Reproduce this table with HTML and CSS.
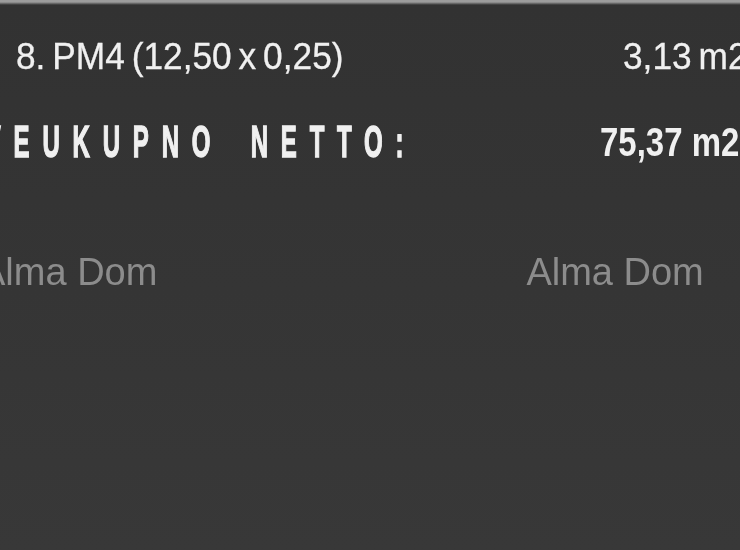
FILE: index.html
```html
<!DOCTYPE html>
<html lang="hr">
<head>
  <meta charset="UTF-8" />
  <meta name="viewport" content="width=device-width, initial-scale=1.0"/>
  <title>Tlocrt - površine</title>
  <link rel="stylesheet" href="styles.css">
</head>
<body>
  <div class="sheet">
    <div class="areas">
      <div class="row">
        <span class="label">8. PM4 (12,50 x 0,25)</span>
        <span class="value">3,13 m2</span>
      </div>
      <div class="row total">
        <span class="label">SVEUKUPNO NETTO:</span>
        <span class="value">75,37 m2</span>
      </div>
    </div>
    <div class="marks">
      <span class="mark">Alma Dom</span>
      <span class="mark">Alma Dom</span>
    </div>
  </div>
</body>
</html>
```

FILE: styles.css
```css
html, body {
  margin: 0;
  height: 100%;
  overflow: hidden;
  background: #363636;
  color: #f0f0f0;
}
.sheet {
  height: 100%;
  background: linear-gradient(#9c9c9c 0, #9c9c9c 2px, #323232 5px, #343434 200px, #383838 100%);
  font-family: 'Liberation Sans', Arial, sans-serif;
}
.areas {
  width: 760px;
  padding-top: 37px;
}
.row {
  display: grid;
  grid-template-columns: 1fr 160px;
  align-items: center;
  height: 40px;
  padding-left: 16px;
  font-size: 36px;
  line-height: 40px;
  word-spacing: -3px;
  white-space: nowrap;
  -webkit-text-stroke: 0.3px currentColor;
}
.row .label, .row .value {
  justify-self: start;
  transform-origin: left center;
  transform: scale(0.98, 1.04);
}
.row .value {
  margin-left: 23px;
}
.total {
  margin-top: 45px;
  margin-left: -44px;
  padding-left: 0;
  width: 804px;
  font-weight: bold;
  -webkit-text-stroke: 0;
}
.total .label {
  font-size: 30px;
  letter-spacing: 16px;
  word-spacing: 10px;
  -webkit-text-stroke: 1px currentColor;
  transform: scale(0.8, 1.49);
}
.total .value {
  margin-left: 0;
  font-size: 34px;
  word-spacing: 0;
  transform: scale(0.97, 1.2);
}
.marks {
  display: flex;
  gap: 369px;
  margin-top: 88px;
  margin-left: -20px;
}
.mark {
  font-size: 38px;
  line-height: 44px;
  color: #8c8c8c;
  white-space: nowrap;
  filter: blur(0.5px);
}
```
